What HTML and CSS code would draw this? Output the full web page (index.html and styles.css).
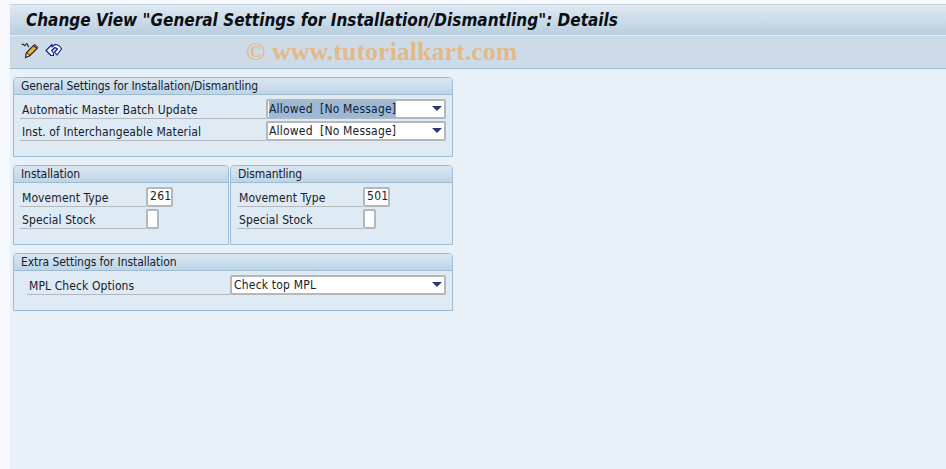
FILE: index.html
```html
<!DOCTYPE html>
<html lang="en">
<head>
<meta charset="utf-8">
<title>Change View</title>
<link rel="stylesheet" href="styles.css">
</head>
<body>
<div class="app">
  <header class="title-bar"><h1>Change View "General Settings for Installation/Dismantling": Details</h1></header>
  <div class="toolbar">
    <svg class="icon" width="18" height="18" viewBox="0 0 18 18">
      <path d="M1 4c.5-1.500 1.500-1 2 0s1 1 1.500 0 1.500-2 2-.5.500 2.500 1.500 2" fill="none" stroke="#222" stroke-width="1.100"/>
      <path d="M4.500 16.500l1-5 7-7 3.500 3-7 7z" fill="#f4b030" stroke="#222" stroke-width="1.100"/>
      <path d="M4.500 16.500l1-5 3.500 3z" fill="#f6e3b8" stroke="#222" stroke-width="1"/>
      <path d="M12.500 4.500l3.500 3 1-1.200-3.500-3z" fill="#d8505a" stroke="#222" stroke-width=".8"/>
    </svg>
    <svg class="icon" width="18" height="18" viewBox="0 0 18 18">
      <path d="M1 9.500l6-6v2.500l3-2.500c2.500 0 5 1.500 6.500 4.500l-4.500 6-2.500-3 3-3-2.500-1.500-3.500 3 2 2.500v2.500H6z" fill="#f4f7fb" stroke="#0a1a90" stroke-width="1.100" stroke-linejoin="round"/>
    </svg>
    <span class="watermark">© www.tutorialkart.com</span>
  </div>
  <main class="content">
    <section class="group">
      <h2 class="group-head">General Settings for Installation/Dismantling</h2>
      <div class="group-body">
        <div class="row">
          <span class="label label-wide">Automatic Master Batch Update</span>
          <div class="select select-wide"><span class="selected">Allowed&nbsp; [No Message]</span><i class="arrow"></i></div>
        </div>
        <div class="row">
          <span class="label label-wide">Inst. of Interchangeable Material</span>
          <div class="select select-wide"><span>Allowed&nbsp; [No Message]</span><i class="arrow"></i></div>
        </div>
      </div>
    </section>
    <div class="pair">
      <section class="group half-left">
        <h2 class="group-head">Installation</h2>
        <div class="group-body">
          <div class="row">
            <span class="label label-short">Movement Type</span>
            <div class="input input-num">261</div>
          </div>
          <div class="row">
            <span class="label label-short">Special Stock</span>
            <div class="input input-flag"></div>
          </div>
        </div>
      </section>
      <section class="group half-right">
        <h2 class="group-head">Dismantling</h2>
        <div class="group-body">
          <div class="row">
            <span class="label label-short">Movement Type</span>
            <div class="input input-num">501</div>
          </div>
          <div class="row">
            <span class="label label-short">Special Stock</span>
            <div class="input input-flag"></div>
          </div>
        </div>
      </section>
    </div>
    <section class="group group-short">
      <h2 class="group-head">Extra Settings for Installation</h2>
      <div class="group-body body-indent">
        <div class="row">
          <span class="label label-mpl">MPL Check Options</span>
          <div class="select select-mpl"><span>Check top MPL</span><i class="arrow"></i></div>
        </div>
      </div>
    </section>
  </main>
</div>
</body>
</html>
```
FILE: styles.css
```css
* { box-sizing: border-box; }
html, body { margin: 0; height: 100%; }
body {
  background: #f6f8fb;
  font-family: "DejaVu Sans Condensed", "Noto Sans", sans-serif;
  font-size: 12px;
  color: #15202c;
  overflow: hidden;
}
.app {
  margin-left: 10px;
  padding-top: 4px;
  height: 469px;
  display: flex;
  flex-direction: column;
  position: relative;
}
.title-bar {
  height: 32px;
  background: linear-gradient(#dfe9f2, #b9cee0);
  border-top: 1px solid #c4d2df;
  border-bottom: 1px solid #e6eef5;
  display: flex;
  align-items: center;
  padding-left: 16px;
}
.title-bar h1 {
  margin: 0;
  font-family: "DejaVu Sans Condensed", "Open Sans", sans-serif;
  font-size: 17px;
  font-weight: 700;
  font-style: italic;
  color: #0c0f14;
  white-space: nowrap;
}
.toolbar {
  height: 33px;
  background: #cddbe8;
  border-bottom: 1px solid #a6bccf;
  display: flex;
  align-items: center;
  gap: 6px;
  padding: 0 0 4px 11px;
  position: relative;
}
.icon { display: block; }
.watermark {
  position: absolute;
  left: 236px;
  top: 1px;
  font-family: "Liberation Serif", serif;
  font-size: 26px;
  font-weight: 700;
  line-height: 30px;
  color: #e5b88a;
  white-space: nowrap;
}
.content {
  flex: 1;
  background: #e8f0f8;
  padding: 8px 0 0 3px;
  display: flex;
  flex-direction: column;
  gap: 8px;
  align-items: flex-start;
}
.group {
  width: 440px;
  height: 80px;
  background: #deeaf4;
  border: 1px solid #9ebbd4;
  border-radius: 4px 4px 0 0;
}
.group-short { height: 58px; }
.group-head {
  margin: 0;
  height: 17px;
  padding: 1px 0 0 7px;
  font-size: 12px;
  font-weight: 400;
  line-height: 15px;
  letter-spacing: -.07px;
  color: #15202c;
  background: linear-gradient(#d9e6f1, #bfd4e7);
  border-bottom: 1px solid #9ebbd4;
  border-radius: 3px 3px 0 0;
  white-space: nowrap;
}
.group-body {
  padding: 4px 6px 0 6px;
  display: flex;
  flex-direction: column;
  gap: 2px;
}
.body-indent { padding-left: 13px; padding-top: 4px; }
.pair { display: flex; gap: 1px; width: 440px; }
.half-left { width: 216px; }
.half-right { width: 223px; }
.row {
  display: flex;
  height: 20px;
  align-items: stretch;
}
.label {
  display: block;
  border-bottom: 1px solid #b4b8bc;
  padding: 3px 0 0 2px;
  line-height: 17px;
  letter-spacing: .1px;
  white-space: nowrap;
}
.label-wide { width: 246px; }
.label-short { width: 126px; }
.label-mpl { width: 203px; }
.input, .select {
  background: #fff;
  border: 2px solid #b4b8bc;
  border-radius: 2px;
  line-height: 16px;
  white-space: nowrap;
}
.input { padding-left: 2px; letter-spacing: .3px; line-height: 15px; }
.input-num { width: 27px; }
.input-flag { width: 13px; }
.select { position: relative; padding-left: 1px; letter-spacing: .2px; }
.select-wide { width: 180px; }
.select-mpl { width: 216px; padding-left: 2px; }
.selected { background: #9ab9d8; display: inline-block; line-height: 16px; }
.arrow {
  position: absolute;
  right: 2px;
  top: 5px;
  width: 0;
  height: 0;
  border-left: 5px solid transparent;
  border-right: 5px solid transparent;
  border-top: 5px solid #2a3a70;
}
```
